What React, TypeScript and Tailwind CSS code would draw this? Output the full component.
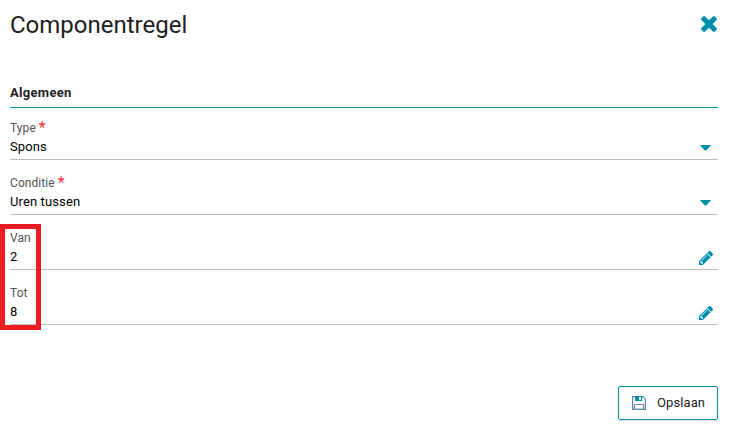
import React from 'react';

interface Field {
    id: string;
    label: string;
    value: string;
    required?: boolean;
    kind: 'select' | 'text';
}

const FIELDS: Field[] = [
    { id: 'type', label: 'Type', value: 'Spons', required: true, kind: 'select' },
    { id: 'conditie', label: 'Conditie', value: 'Uren tussen', required: true, kind: 'select' },
    { id: 'van', label: 'Van', value: '2', kind: 'text' },
    { id: 'tot', label: 'Tot', value: '8', kind: 'text' },
];

const CloseIcon = () => (
    <svg className="h-4 w-4" viewBox="110 366 1188 1188" fill="#008fab">
        <path d="M1298 1322q0 40-28 68l-136 136q-28 28-68 28t-68-28L704 1232l-294 294q-28 28-68 28t-68-28L138 1390q-28-28-28-68t28-68l294-294L138 666q-28-28-28-68t28-68l136-136q28-28 68-28t68 28l294 294 294-294q28-28 68-28t68 28l136 136q28 28 28 68t-28 68L976 960l294 294q28 28 28 68z" />
    </svg>
);

const PencilIcon = () => (
    <svg className="mr-[5px] mb-1 h-3.5 w-3.5" viewBox="0 149 1515 1515" fill="#008fab">
        <path d="M363 1536l91-91-235-235-91 91v107h128v128h107zM886 608q0-22-22-22-10 0-17 7L305 1135q-7 7-7 17 0 22 22 22 10 0 17-7L879 625q7-7 7-17zM832 416l416 416L416 1664H0v-416zM1515 512q0 53-37 90l-166 166L896 352l166-165q36-38 90-38 53 0 91 38l235 234q37 39 37 91z" />
    </svg>
);

const CaretIcon = () => (
    <svg className="mr-[7px] mb-2 h-[6px] w-[11px]" viewBox="0 0 11 6" fill="#008fab">
        <path d="M0.3 0h10.4v0.8L5.5 6 0.3 0.8z" />
    </svg>
);

const SaveIcon = () => (
    <svg className="mr-[11px] h-3.5 w-3.5" viewBox="0 0 14 14" fill="none">
        <path d="M0.6 0.6h10.2l2.6 2.6v10.2H0.6z" stroke="#4f8ba8" strokeWidth="1.2" />
        <path d="M2.5 13.4V8.5h9v4.9z" stroke="#6f8fa3" strokeWidth="1.2" />
        <path d="M3 0h7v5H3z" fill="#008fab" />
        <path d="M7 1h2v3H7z" fill="#fff" />
    </svg>
);

const FieldRow: React.FC<{ field: Field }> = ({ field }) => (
    <div className="flex h-10 items-end justify-between border-b border-[#bdbdbd]">
        <div className="h-full">
            <div className="flex h-4 gap-[3px] text-xs leading-4 tracking-[0.08px] text-[#555]">
                <span>{field.label}</span>
                {field.required && <span className="text-base leading-4 text-[#ff3140]">*</span>}
            </div>
            <div className="mt-px text-[13px] leading-5 tracking-[0.12px] text-black">{field.value}</div>
        </div>
        {field.kind === 'select' ? <CaretIcon /> : <PencilIcon />}
    </div>
);

const App: React.FC = () => (
    <div className="relative h-[431px] w-[730px] bg-white pt-2 pr-3 pl-2.5 font-['Roboto',sans-serif] text-[#212121]">
        <header className="flex h-8 items-center justify-between">
            <h1 className="pt-0.5 text-2xl">Componentregel</h1>
            <button aria-label="Sluiten" className="mr-px">
                <CloseIcon />
            </button>
        </header>

        <h2 className="mt-11 flex h-6 border-b border-[#008fab] text-[13px] leading-[17px] font-bold tracking-[0.3px]">
            Algemeen
        </h2>

        <div className="mt-3 flex flex-col gap-[15px]">
            {FIELDS.map(field => (
                <FieldRow key={field.id} field={field} />
            ))}
        </div>

        <div className="mt-[61px] flex justify-end">
            <button className="flex h-[34px] w-[100px] items-center rounded-xs border border-[#008fab] pl-[13px] text-[13px] tracking-[0.1px] shadow">
                <SaveIcon />
                Opslaan
            </button>
        </div>

        {/* Highlight around the from/to values */}
        <div className="pointer-events-none absolute top-[224px] left-0 h-[106px] w-[41px] border-5 border-[#ed1c24]" />
    </div>
);

export default App;
